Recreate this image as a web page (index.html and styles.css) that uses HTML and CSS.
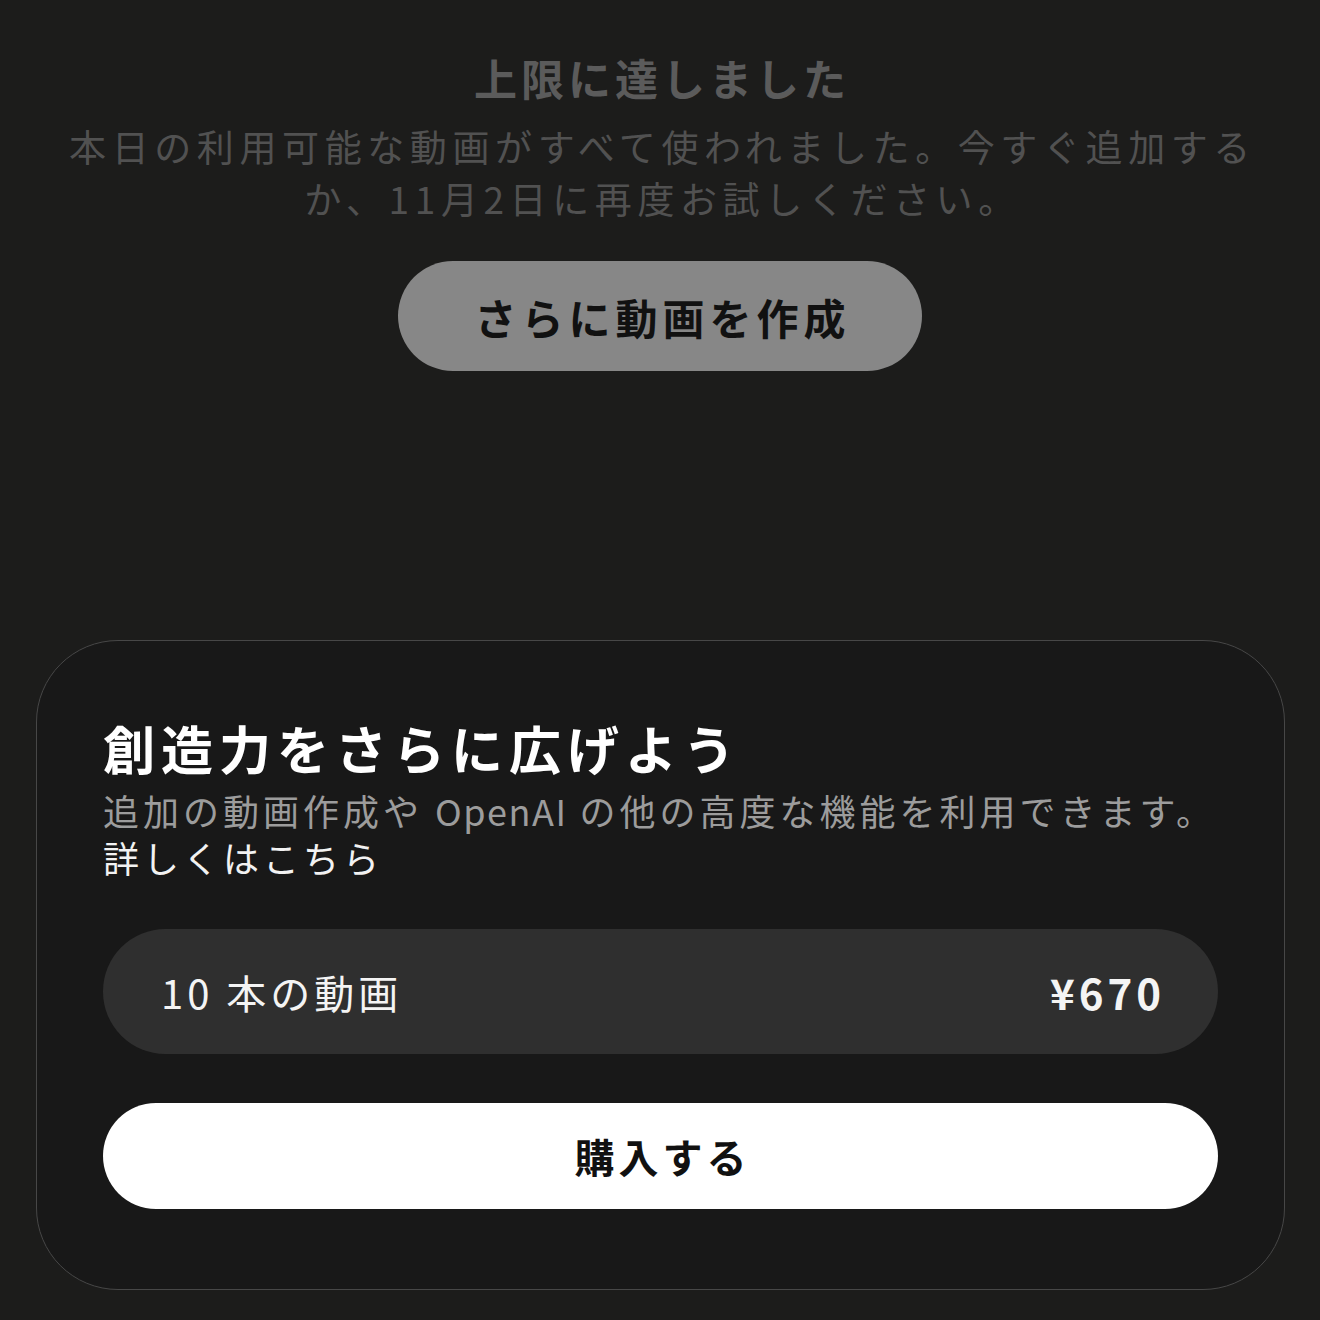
FILE: index.html
```html
<!DOCTYPE html>
<html lang="ja">
<head>
<meta charset="utf-8">
<title>上限に達しました</title>
<link rel="stylesheet" href="styles.css">
</head>
<body>
<div class="page">
  <section class="limit">
    <h1 class="limit-title">上限に達しました</h1>
    <p class="limit-text">本日の利用可能な動画がすべて使われました。今すぐ追加する<br>か、11月2日に再度お試しください。</p>
    <button class="more-btn">さらに動画を作成</button>
  </section>
  <section class="card">
    <h2 class="card-title">創造力をさらに広げよう</h2>
    <p class="card-text">追加の動画作成や <span class="latin">OpenAI</span> の他の高度な機能を利用できます。<span class="card-link">詳しくはこちら</span></p>
    <div class="price-row">
      <span class="price-label">10 本の動画</span>
      <span class="price-value">¥670</span>
    </div>
    <button class="buy-btn">購入する</button>
  </section>
</div>
</body>
</html>
```

FILE: styles.css
```css
html, body {
  margin: 0;
  padding: 0;
  background: #1b1b1b;
}
body {
  font-family: "Noto Sans CJK JP", "Noto Sans", sans-serif;
  color: #fff;
}
.page {
  width: 1320px;
  height: 1320px;
  display: flex;
  flex-direction: column;
  background: #1c1c1b;
}
.limit {
  display: flex;
  flex-direction: column;
  align-items: center;
  padding-top: 52px;
}
.limit-title {
  margin: 0;
  font-size: 43px;
  line-height: 50px;
  font-weight: 700;
  letter-spacing: 4px;
  padding-left: 4px;
  color: #5b5b5b;
}
.limit-text {
  margin: 18px 0 0;
  font-size: 37px;
  line-height: 52px;
  letter-spacing: 5.6px;
  padding-left: 5px;
  text-align: center;
  color: #515151;
}
.more-btn {
  margin-top: 37px;
  width: 524px;
  height: 110px;
  border: none;
  border-radius: 55px;
  background: #878787;
  font-family: inherit;
  font-size: 42px;
  font-weight: 700;
  letter-spacing: 5px;
  padding: 0 0 0 5px;
  color: #111;
}
.card {
  margin: 269px 35px 0 36px;
  height: 650px;
  box-sizing: border-box;
  border: 1.5px solid #474747;
  border-radius: 82px;
  background: #181818;
  padding: 78px 66px 0 66px;
  display: flex;
  flex-direction: column;
}
.card-title {
  margin: 0;
  font-size: 52px;
  line-height: 58px;
  font-weight: 700;
  letter-spacing: 6px;
  color: #fff;
}
.card-text {
  margin: 10px 0 0;
  font-size: 36px;
  line-height: 47px;
  letter-spacing: 4px;
  color: #9c9c9c;
}
.latin {
  letter-spacing: 1.5px;
}
.card-link {
  display: block;
  color: #f2f2f2;
}
.price-row {
  margin-top: 48px;
  height: 125px;
  border-radius: 63px;
  background: #2f2f2f;
  display: flex;
  align-items: center;
  justify-content: space-between;
  padding: 0 57px 0 58px;
}
.price-label {
  font-size: 40px;
  letter-spacing: 4px;
  color: #f4f4f4;
}
.price-value {
  font-size: 42px;
  font-weight: 700;
  letter-spacing: 4px;
  margin-right: -4px;
  color: #f4f4f4;
}
.buy-btn {
  margin-top: 49px;
  height: 106px;
  border: none;
  border-radius: 53px;
  background: #fff;
  font-family: inherit;
  font-size: 40px;
  font-weight: 700;
  letter-spacing: 4px;
  padding: 0 0 0 4px;
  color: #111;
}
```
